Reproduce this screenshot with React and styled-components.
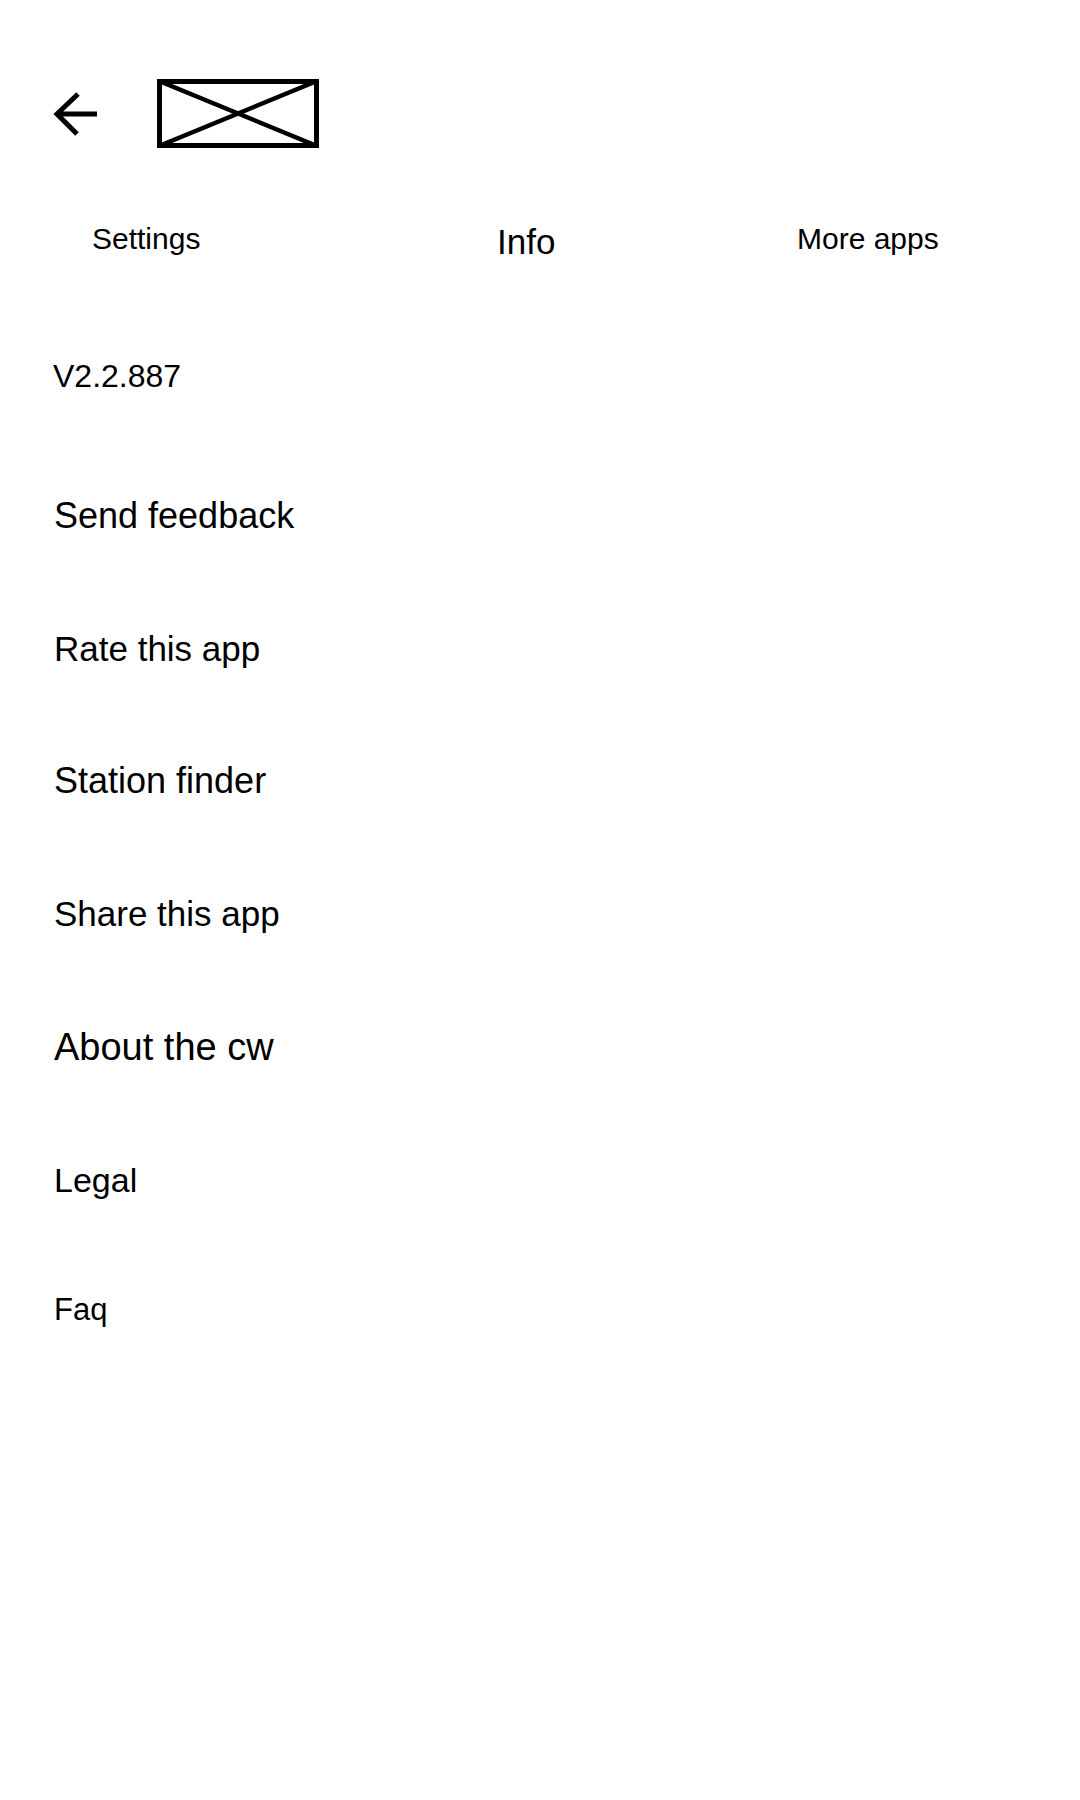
import React from "react";
import styled, { createGlobalStyle } from "styled-components";

const GlobalStyle = createGlobalStyle`
  body {
    margin: 0;
    background: #ffffff;
    color: #000000;
    font-family: "Liberation Sans", Arial, sans-serif;
  }
`;

const items = [
  { label: "Send feedback", size: 36 },
  { label: "Rate this app", size: 35 },
  { label: "Station finder", size: 36 },
  { label: "Share this app", size: 35 },
  { label: "About the cw", size: 38 },
  { label: "Legal", size: 34 },
  { label: "Faq", size: 31 },
];

function App() {
  return (
    <>
      <GlobalStyle />
      <Page>
        <Header>
          <BackButton aria-label="Back">
            <svg width="48" height="48" viewBox="0 0 48 48" fill="none">
              <path
                d="M45 24H5M26 4L5 24L25 44"
                stroke="#000"
                strokeWidth="5"
              />
            </svg>
          </BackButton>
          {/* logo placeholder */}
          <svg width="162" height="69" viewBox="0 0 162 69" fill="none">
            <rect x="2.5" y="2.5" width="157" height="64" stroke="#000" strokeWidth="5" />
            <path d="M2 2L160 67M160 2L2 67" stroke="#000" strokeWidth="4.5" />
          </svg>
        </Header>

        <Tabs>
          <Tab>Settings</Tab>
          <Tab $active>Info</Tab>
          <Tab>More apps</Tab>
        </Tabs>

        <Version>V2.2.887</Version>

        <Menu>
          {items.map((item) => (
            <MenuItem key={item.label} $size={item.size}>
              {item.label}
            </MenuItem>
          ))}
        </Menu>
      </Page>
    </>
  );
}

export default App;

const Page = styled.div`
  display: flex;
  flex-direction: column;
  width: 1080px;
  min-height: 1800px;
`;

const Header = styled.div`
  display: flex;
  align-items: center;
  gap: 57px;
  padding: 79px 0 0 52px;
`;

const BackButton = styled.button`
  display: flex;
  padding: 0;
  border: none;
  background: none;
  cursor: pointer;
`;

const Tabs = styled.div`
  display: grid;
  grid-template-columns: 405px 300px 1fr;
  align-items: start;
  padding-left: 92px;
  margin-top: 76px;
`;

const Tab = styled.div`
  font-size: ${(props) => (props.$active ? "35px" : "30px")};
  line-height: 1;
  cursor: pointer;
`;

const Version = styled.div`
  font-size: 32px;
  line-height: 1;
  padding-left: 53px;
  margin-top: 101px;
`;

const Menu = styled.div`
  display: flex;
  flex-direction: column;
  gap: 97px;
  padding-left: 54px;
  margin-top: 106px;
`;

const MenuItem = styled.div`
  font-size: ${(props) => props.$size}px;
  line-height: 1;
  cursor: pointer;
`;
